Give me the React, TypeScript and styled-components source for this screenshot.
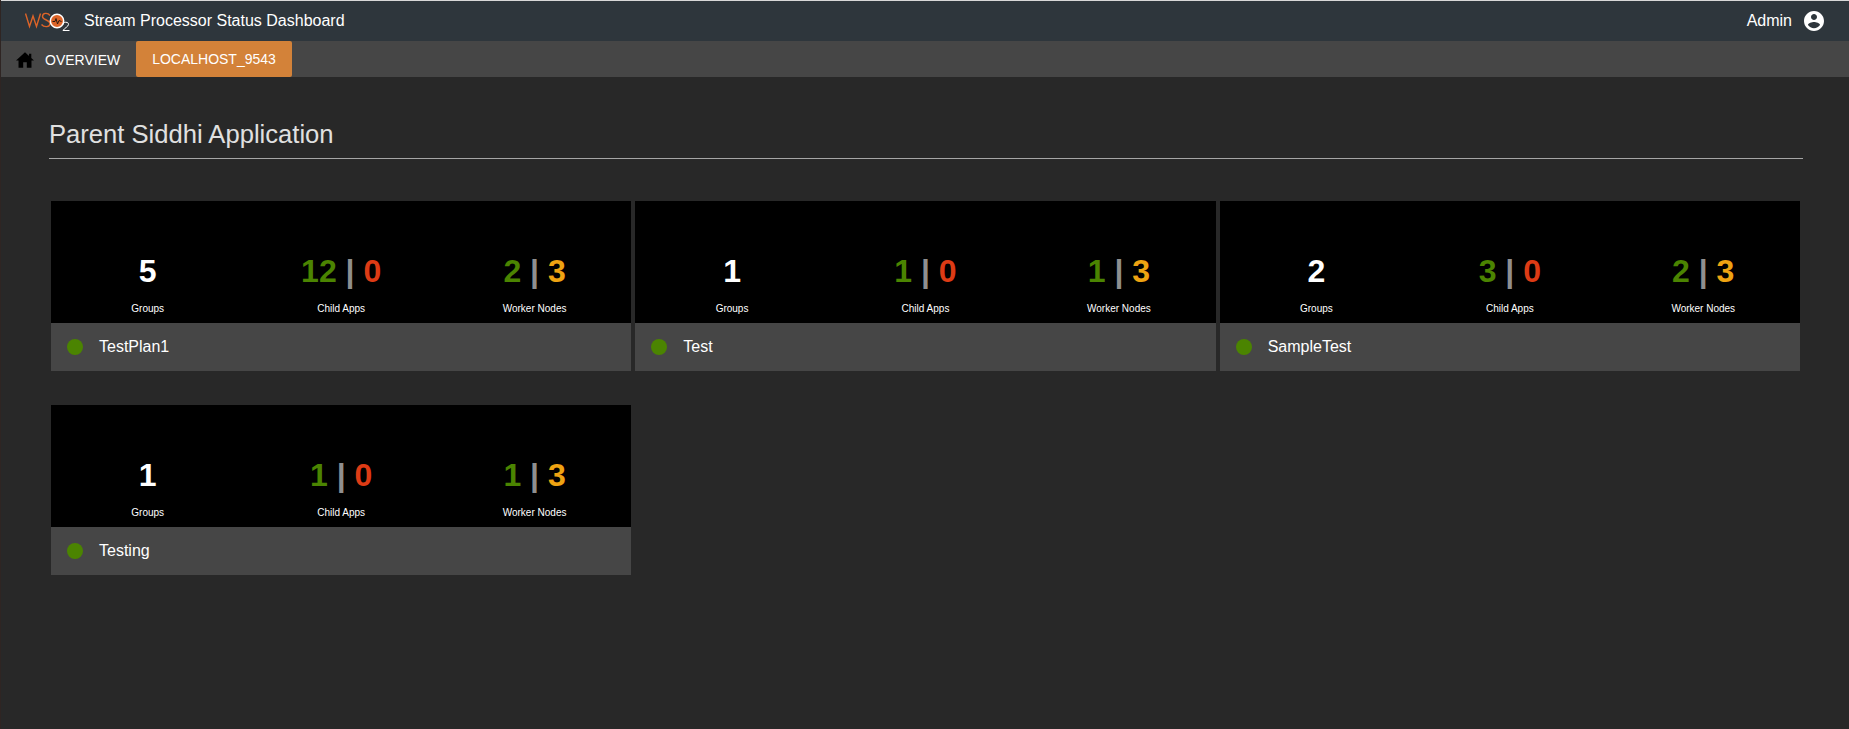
import React from 'react'
import styled, { createGlobalStyle } from 'styled-components';

const GlobalStyle = createGlobalStyle`
  html, body {
    margin: 0;
    padding: 0;
    background: #282828;
    font-family: "Liberation Sans", Arial, sans-serif;
  }
`;

const Page = styled.div`
  min-height: 729px;
  box-sizing: border-box;
  overflow: hidden;
  border-left: 1px solid #2f2523;
  background: #282828;
`;

const Header = styled.header`
  height: 40px;
  border-top: 1px solid #d8d8d8;
  background: #2e363c;
  display: flex;
  align-items: center;
  justify-content: space-between;
  padding-left: 24px;
  padding-right: 23px;
`;

const HeaderLeft = styled.div`
  display: flex;
  align-items: center;
`;

const Logo = styled.svg`
  width: 46px;
  height: 26px;
  display: block;
`;

const AppTitle = styled.span`
  margin-left: 13px;
  color: #fff;
  font-size: 16px;
`;

const UserBox = styled.div`
  display: flex;
  align-items: center;
  color: #fff;
  font-size: 16px;
  gap: 10px;
`;

const TabBar = styled.nav`
  height: 36px;
  background: #464646;
  display: flex;
  align-items: stretch;
  padding-left: 15px;
`;

const HomeTab = styled.div`
  display: flex;
  align-items: center;
  gap: 11px;
  color: #fff;
  font-size: 14px;
  width: 120px;
  padding-top: 2px;
  box-sizing: border-box;
`;

const ActiveTab = styled.div`
  width: 156px;
  display: flex;
  align-items: center;
  justify-content: center;
  background: #d38239;
  border-radius: 2px;
  color: #fff;
  font-size: 14px;
`;

const Content = styled.main`
  padding: 42px 46px 0 48px;
`;

const Title = styled.h1`
  margin: 0;
  height: 40px;
  box-sizing: border-box;
  border-bottom: 1px solid #a6a6a6;
  color: #e0e0e0;
  font-size: 25.6px;
  font-weight: 400;
  line-height: 30px;
`;

const CardGrid = styled.div`
  margin: 42px 3px 0 2px;
  display: grid;
  grid-template-columns: repeat(3, 1fr);
  column-gap: 4px;
  row-gap: 34px;
`;

const Card = styled.article`
  height: 170px;
  display: flex;
  flex-direction: column;
`;

const Stats = styled.div`
  height: 122px;
  background: #000;
  display: grid;
  grid-template-columns: repeat(3, 1fr);
`;

const Stat = styled.div`
  display: flex;
  flex-direction: column;
  align-items: center;
  padding-top: 52px;
`;

const StatValue = styled.div`
  height: 36px;
  white-space: pre;
  font-size: 32px;
  font-weight: 700;
  line-height: 36px;
`;

const Num = styled.span<{ $color: string }>`
  color: ${(p) => p.$color};
`;

const StatLabel = styled.div`
  margin-top: 14px;
  color: #fff;
  font-size: 10px;
  line-height: 12px;
`;

const CardFooter = styled.div`
  flex: 1;
  background: #464646;
  display: flex;
  align-items: center;
  padding-left: 16px;
`;

const StatusDot = styled.span`
  width: 16px;
  height: 16px;
  border-radius: 50%;
  background: #4b8401;
`;

const CardName = styled.span`
  margin-left: 16px;
  color: #fff;
  font-size: 16px;
`;

const GREEN = '#4b8401';
const RED = '#dd3b15';
const AMBER = '#eea312';
const BAR = '#8f8f8f';

type AppStat = {
  name: string;
  groups: number;
  childUp: number;
  childDown: number;
  workerUp: number;
  workerDown: number;
};

const apps: AppStat[] = [
  { name: 'TestPlan1', groups: 5, childUp: 12, childDown: 0, workerUp: 2, workerDown: 3 },
  { name: 'Test', groups: 1, childUp: 1, childDown: 0, workerUp: 1, workerDown: 3 },
  { name: 'SampleTest', groups: 2, childUp: 3, childDown: 0, workerUp: 2, workerDown: 3 },
  { name: 'Testing', groups: 1, childUp: 1, childDown: 0, workerUp: 1, workerDown: 3 },
];

function WsoLogo() {
  return (
    <Logo viewBox="0 0 46 26">
      <path d="M0.5 5.5 L4.5 18.5 L8 8 L11.5 18.5 L15.5 5.5" fill="none" stroke="#dd6428" strokeWidth="1.4" />
      <path d="M25 7.5 C23 4.5 17.5 4.5 17.5 8.5 C17.5 12.5 25 11.5 25 15.5 C25 19.5 19 19.5 16.5 16.5" fill="none" stroke="#dd6428" strokeWidth="1.4" />
      <circle cx="32" cy="13" r="6.7" fill="#dd6428" stroke="#fff" strokeWidth="1.5" />
      <path d="M27.5 13.5 H30 L31 10.5 L32.5 16 L34 12.5 L36.5 13.5" fill="none" stroke="#2b1a10" strokeWidth="1" />
      <path d="M38 16.5 C38 13.5 44 13.5 43.5 16.5 C43 19 39.5 20 38 22.5 H44.5" fill="none" stroke="#fff" strokeWidth="1" />
    </Logo>
  );
}

function HomeIcon() {
  return (
    <svg width="18" height="18" viewBox="0 0 20 20" fill="#000">
      <path d="M10 1.5 L14.5 5.6 V3 H17 V7.9 L20 10.6 H17.2 V18.5 H12 V12.5 H8 V18.5 H2.8 V10.6 H0 Z" />
    </svg>
  );
}

function UserIcon() {
  return (
    <svg width="24" height="24" viewBox="0 0 24 24" fill="#fff">
      <path d="M12 2C6.48 2 2 6.48 2 12s4.48 10 10 10 10-4.48 10-10S17.52 2 12 2zm0 3c1.66 0 3 1.34 3 3s-1.34 3-3 3-3-1.34-3-3 1.34-3 3-3zm0 14.2c-2.5 0-4.71-1.28-6-3.22.03-1.99 4-3.08 6-3.08 1.99 0 5.97 1.09 6 3.08-1.29 1.94-3.5 3.22-6 3.22z" />
    </svg>
  );
}

function App() {
  return (
    <Page>
      <GlobalStyle />
      <Header>
        <HeaderLeft>
          <WsoLogo />
          <AppTitle>Stream Processor Status Dashboard</AppTitle>
        </HeaderLeft>
        <UserBox>
          Admin
          <UserIcon />
        </UserBox>
      </Header>
      <TabBar>
        <HomeTab>
          <HomeIcon />
          OVERVIEW
        </HomeTab>
        <ActiveTab>LOCALHOST_9543</ActiveTab>
      </TabBar>
      <Content>
        <Title>Parent Siddhi Application</Title>
        <CardGrid>
          {apps.map((app) => (
            <Card key={app.name}>
              <Stats>
                <Stat>
                  <StatValue><Num $color="#fff">{app.groups}</Num></StatValue>
                  <StatLabel>Groups</StatLabel>
                </Stat>
                <Stat>
                  <StatValue>
                    <Num $color={GREEN}>{app.childUp}</Num>
                    <Num $color={BAR}> | </Num>
                    <Num $color={RED}>{app.childDown}</Num>
                  </StatValue>
                  <StatLabel>Child Apps</StatLabel>
                </Stat>
                <Stat>
                  <StatValue>
                    <Num $color={GREEN}>{app.workerUp}</Num>
                    <Num $color={BAR}> | </Num>
                    <Num $color={AMBER}>{app.workerDown}</Num>
                  </StatValue>
                  <StatLabel>Worker Nodes</StatLabel>
                </Stat>
              </Stats>
              <CardFooter>
                <StatusDot />
                <CardName>{app.name}</CardName>
              </CardFooter>
            </Card>
          ))}
        </CardGrid>
      </Content>
    </Page>
  )
}

export default App
